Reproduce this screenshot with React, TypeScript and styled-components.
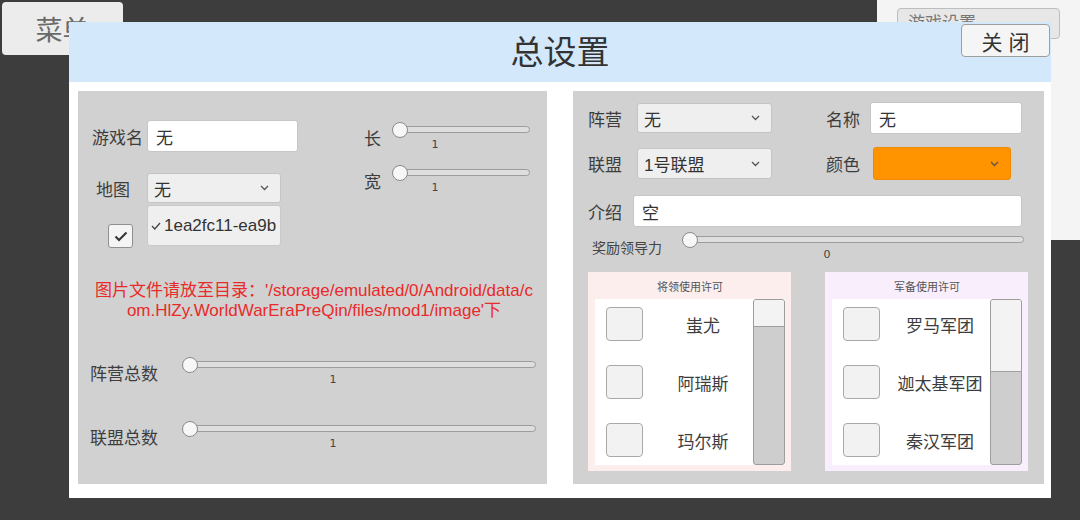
import * as React from 'react'
import styled, { createGlobalStyle } from 'styled-components'

const GlobalStyle = createGlobalStyle`
  html, body {
    margin: 0;
    padding: 0;
  }
  body {
    width: 1080px;
    height: 520px;
    overflow: hidden;
    background: #3d3d3d;
    font-family: "Liberation Sans", "Noto Sans CJK SC", sans-serif;
    color: #3d3d3d;
  }
`

const Chevron: React.FC = () => (
  <svg width="9" height="6" viewBox="0 0 9 6">
    <polyline points="1,1 4.5,4.5 8,1" fill="none" stroke="#555" strokeWidth="1.3" />
  </svg>
)

const Slider: React.FC<{ width: number; value: string; at: number }> = ({ width, value, at }) => (
  <SliderWrap $w={width}>
    <TrackRow>
      <Track />
      <Knob />
    </TrackRow>
    <SliderValue $at={at}>{value}</SliderValue>
  </SliderWrap>
)

const PermissionBox: React.FC<{ title: string; bg: string; thumb: number; items: string[] }> = ({
  title,
  bg,
  thumb,
  items,
}) => (
  <PermBox $bg={bg}>
    <PermTitle>{title}</PermTitle>
    <PermList>
      <PermItems>
        {items.map((name) => (
          <PermItem key={name}>
            <PermCheck />
            <PermLabel>{name}</PermLabel>
          </PermItem>
        ))}
      </PermItems>
      <ScrollBar>
        <ScrollThumb $h={thumb} />
      </ScrollBar>
    </PermList>
  </PermBox>
)

export default function App() {
  return (
    <Screen>
      <GlobalStyle />
      <MenuButton>菜单</MenuButton>
      <SidePanel>
        <SideSelect>游戏设置</SideSelect>
      </SidePanel>

      <Modal>
        <Header>
          <Title>总设置</Title>
          <CloseButton>关 闭</CloseButton>
        </Header>
        <Body>
          <Panel $w={469} $pad="29px 11px 0 14px">
            <TopSection>
              <NameColumn>
                <FieldRow>
                  <FieldLabel $w={55}>游戏名</FieldLabel>
                  <TextField $w={151}>无</TextField>
                </FieldRow>
                <FieldRow $mt={21}>
                  <FieldLabel $w={55} $pl={4}>地图</FieldLabel>
                  <Select $w={134} $h={30}>
                    <span>无</span>
                    <Chevron />
                  </Select>
                </FieldRow>
                <OptionRow>
                  <CheckCell>
                    <CheckBox>
                      <svg width="14" height="11" viewBox="0 0 14 11">
                        <polyline points="1.5,5.5 5,9 12.5,1.5" fill="none" stroke="#333" strokeWidth="2" />
                      </svg>
                    </CheckBox>
                  </CheckCell>
                  <OptionItem>
                    <svg width="10" height="8" viewBox="0 0 10 8">
                      <polyline points="1,4 3.8,7 9,1" fill="none" stroke="#444" strokeWidth="1.3" />
                    </svg>
                    <span>1ea2fc11-ea9b</span>
                  </OptionItem>
                </OptionRow>
              </NameColumn>
              <SizeColumn>
                <SliderLine>
                  <FieldLabel>长</FieldLabel>
                  <Slider width={138} value="1" at={43} />
                </SliderLine>
                <SliderLine $mt={13}>
                  <FieldLabel>宽</FieldLabel>
                  <Slider width={138} value="1" at={43} />
                </SliderLine>
              </SizeColumn>
            </TopSection>

            <Notice>
              图片文件请放至目录：'/storage/emulated/0/Android/data/c
              <br />
              om.HlZy.WorldWarEraPreQin/files/mod1/image'下
            </Notice>

            <CountRow $mt={36}>
              <FieldLabel $w={68}>阵营总数</FieldLabel>
              <Slider width={354} value="1" at={151} />
            </CountRow>
            <CountRow $mt={34}>
              <FieldLabel $w={68}>联盟总数</FieldLabel>
              <Slider width={354} value="1" at={151} />
            </CountRow>
          </Panel>

          <Panel $w={471} $pad="11px 0 0 15px">
            <FieldRow>
              <FieldGroup>
                <FieldLabel>阵营</FieldLabel>
                <Select $w={135} $h={30}>
                  <span>无</span>
                  <Chevron />
                </Select>
              </FieldGroup>
              <FieldLabel>名称</FieldLabel>
              <TextField $w={152} $ml={10}>无</TextField>
            </FieldRow>
            <FieldRow $mt={13}>
              <FieldGroup>
                <FieldLabel>联盟</FieldLabel>
                <Select $w={135} $h={31}>
                  <span>1号联盟</span>
                  <Chevron />
                </Select>
              </FieldGroup>
              <FieldLabel>颜色</FieldLabel>
              <Select $w={138} $h={33} $ml={13} $bg="#ff9300" $border="#f08a00">
                <span />
                <Chevron />
              </Select>
            </FieldRow>
            <FieldRow $mt={15}>
              <FieldLabel>介绍</FieldLabel>
              <TextField $w={389} $ml={11}>空</TextField>
            </FieldRow>
            <RewardRow>
              <SmallLabel>奖励领导力</SmallLabel>
              <Slider width={342} value="0" at={145} />
            </RewardRow>
            <PermRow>
              <PermissionBox
                title="将领使用许可"
                bg="#fdeeee"
                thumb={26}
                items={['蚩尤', '阿瑞斯', '玛尔斯']}
              />
              <PermissionBox
                title="军备使用许可"
                bg="#f8eefc"
                thumb={71}
                items={['罗马军团', '迦太基军团', '秦汉军团']}
              />
            </PermRow>
          </Panel>
        </Body>
      </Modal>
    </Screen>
  )
}

const Screen = styled.div`
  position: relative;
  width: 1080px;
  height: 520px;
  display: flex;
  justify-content: space-between;
  align-items: flex-start;
`

const MenuButton = styled.div`
  margin: 2px;
  width: 121px;
  height: 53px;
  box-sizing: border-box;
  background: #ececec;
  border-radius: 4px;
  display: flex;
  align-items: center;
  justify-content: center;
  font-size: 27px;
  color: #6a6a6a;
`

const SidePanel = styled.div`
  width: 203px;
  height: 240px;
  box-sizing: border-box;
  background: #f4f4f4;
  padding: 8px 20px 0 20px;
`

const SideSelect = styled.div`
  height: 31px;
  box-sizing: border-box;
  background: #e7e7e7;
  border: 1px solid #bdbdbd;
  border-radius: 4px;
  padding-left: 10px;
  font-size: 17px;
  line-height: 29px;
  color: #777;
`

const Modal = styled.div`
  position: absolute;
  left: 69px;
  top: 22px;
  width: 982px;
  height: 476px;
  background: #fff;
  display: flex;
  flex-direction: column;
`

const Header = styled.div`
  height: 60px;
  flex-shrink: 0;
  background: #d3e9fb;
  display: grid;
  grid-template-columns: 1fr auto 1fr;
  align-items: center;
`

const Title = styled.div`
  grid-column: 2;
  font-size: 33px;
  color: #333;
  line-height: 1;
`

const CloseButton = styled.div`
  grid-column: 3;
  justify-self: end;
  align-self: start;
  margin: 2px 1px 0 0;
  width: 89px;
  height: 33px;
  box-sizing: border-box;
  background: #f5f5f5;
  border: 1px solid #9e9e9e;
  border-radius: 4px;
  display: flex;
  align-items: center;
  justify-content: center;
  font-size: 21px;
  color: #333;
`

const Body = styled.div`
  flex: 1;
  display: flex;
  gap: 26px;
  padding: 9px 7px 14px 9px;
  min-height: 0;
`

const Panel = styled.div<{ $w: number; $pad: string }>`
  width: ${(p) => p.$w}px;
  height: 100%;
  box-sizing: border-box;
  padding: ${(p) => p.$pad};
  background: #d1d1d1;
`

const TopSection = styled.div`
  display: flex;
  align-items: flex-start;
`

const NameColumn = styled.div`
  width: 272px;
  display: flex;
  flex-direction: column;
`

const SizeColumn = styled.div`
  margin-top: 2px;
  display: flex;
  flex-direction: column;
`

const FieldRow = styled.div<{ $mt?: number }>`
  display: flex;
  align-items: center;
  margin-top: ${(p) => p.$mt ?? 0}px;
`

const FieldGroup = styled.div`
  width: 238px;
  display: flex;
  align-items: center;
  gap: 15px;
`

const FieldLabel = styled.div<{ $w?: number; $pl?: number }>`
  ${(p) => (p.$w ? `width: ${p.$w}px;` : '')}
  padding-left: ${(p) => p.$pl ?? 0}px;
  box-sizing: border-box;
  flex-shrink: 0;
  white-space: nowrap;
  font-size: 17px;
  color: #3d3d3d;
`

const SmallLabel = styled.div`
  margin-left: 4px;
  width: 90px;
  flex-shrink: 0;
  font-size: 14px;
  color: #444;
`

const TextField = styled.div<{ $w: number; $ml?: number }>`
  width: ${(p) => p.$w}px;
  height: 32px;
  margin-left: ${(p) => p.$ml ?? 0}px;
  box-sizing: border-box;
  background: #fff;
  border: 1px solid #c6c6c6;
  border-radius: 3px;
  padding-left: 8px;
  display: flex;
  align-items: center;
  font-size: 17px;
  color: #333;
`

const Select = styled.div<{ $w: number; $h: number; $ml?: number; $bg?: string; $border?: string }>`
  width: ${(p) => p.$w}px;
  height: ${(p) => p.$h}px;
  margin-left: ${(p) => p.$ml ?? 0}px;
  box-sizing: border-box;
  background: ${(p) => p.$bg ?? '#efefef'};
  border: 1px solid ${(p) => p.$border ?? '#c4c4c4'};
  border-radius: 3px;
  padding: 0 11px 0 6px;
  display: flex;
  align-items: center;
  justify-content: space-between;
  font-size: 17px;
  color: #333;
`

const OptionRow = styled.div`
  margin-top: 2px;
  display: flex;
  align-items: flex-start;
`

const CheckCell = styled.div`
  width: 55px;
  padding: 19px 0 0 16px;
  box-sizing: border-box;
`

const CheckBox = styled.div`
  width: 25px;
  height: 24px;
  box-sizing: border-box;
  background: #f4f4f4;
  border: 1px solid #8f8f8f;
  border-radius: 3px;
  display: flex;
  align-items: center;
  justify-content: center;
`

const OptionItem = styled.div`
  width: 134px;
  height: 41px;
  box-sizing: border-box;
  background: #efefef;
  border: 1px solid #c9c9c9;
  border-radius: 3px;
  padding-left: 3px;
  display: flex;
  align-items: center;
  gap: 3px;
  font-size: 17px;
  color: #333;
`

const SliderLine = styled.div<{ $mt?: number }>`
  display: flex;
  align-items: center;
  gap: 11px;
  margin-top: ${(p) => p.$mt ?? 0}px;
`

const SliderWrap = styled.div<{ $w: number }>`
  width: ${(p) => p.$w}px;
  height: 30px;
  flex-shrink: 0;
  display: flex;
  flex-direction: column;
`

const TrackRow = styled.div`
  position: relative;
  height: 16px;
`

const Track = styled.div`
  margin: 4px 0 0 8px;
  height: 7px;
  box-sizing: border-box;
  background: #dedede;
  border: 1px solid #9c9c9c;
  border-radius: 4px;
`

const Knob = styled.div`
  position: absolute;
  left: 0;
  top: 0;
  width: 16px;
  height: 16px;
  box-sizing: border-box;
  border-radius: 50%;
  background: #f7f7f7;
  border: 1px solid #8a8a8a;
`

const SliderValue = styled.div<{ $at: number }>`
  margin-left: ${(p) => p.$at}px;
  transform: translateX(-50%);
  align-self: flex-start;
  font-family: "DejaVu Sans", sans-serif;
  font-size: 11px;
  line-height: 14px;
  color: #444;
`

const Notice = styled.div`
  margin-top: 33px;
  text-align: center;
  white-space: nowrap;
  font-size: 17px;
  line-height: 20px;
  color: #e92a2a;
`

const CountRow = styled.div<{ $mt: number }>`
  display: flex;
  align-items: center;
  gap: 24px;
  margin: ${(p) => p.$mt}px 0 0 -2px;
`

const RewardRow = styled.div`
  display: flex;
  align-items: center;
  margin-top: 5px;
`

const PermRow = styled.div`
  display: flex;
  gap: 34px;
  margin-top: 10px;
`

const PermBox = styled.div<{ $bg: string }>`
  width: 203px;
  height: 199px;
  box-sizing: border-box;
  background: ${(p) => p.$bg};
  padding: 0 6px 6px 7px;
  display: flex;
  flex-direction: column;
`

const PermTitle = styled.div`
  height: 27px;
  flex-shrink: 0;
  display: flex;
  align-items: center;
  justify-content: center;
  font-size: 11px;
  color: #555;
`

const PermList = styled.div`
  flex: 1;
  background: #fff;
  display: flex;
`

const PermItems = styled.div`
  flex: 1;
  padding-top: 8px;
  display: flex;
  flex-direction: column;
  gap: 24px;
`

const PermItem = styled.div`
  height: 34px;
  display: flex;
  align-items: center;
`

const PermCheck = styled.div`
  margin-left: 11px;
  width: 37px;
  height: 34px;
  flex-shrink: 0;
  box-sizing: border-box;
  background: #f2f2f2;
  border: 1px solid #a9a9a9;
  border-radius: 4px;
`

const PermLabel = styled.div`
  flex: 1;
  padding-left: 10px;
  text-align: center;
  white-space: nowrap;
  font-size: 17px;
  color: #3d3d3d;
`

const ScrollBar = styled.div`
  width: 32px;
  flex-shrink: 0;
  box-sizing: border-box;
  background: #cecece;
  border: 1px solid #9d9d9d;
  border-radius: 3px;
  overflow: hidden;
`

const ScrollThumb = styled.div<{ $h: number }>`
  height: ${(p) => p.$h}px;
  background: #f3f3f3;
  border-bottom: 1px solid #a0a0a0;
`
